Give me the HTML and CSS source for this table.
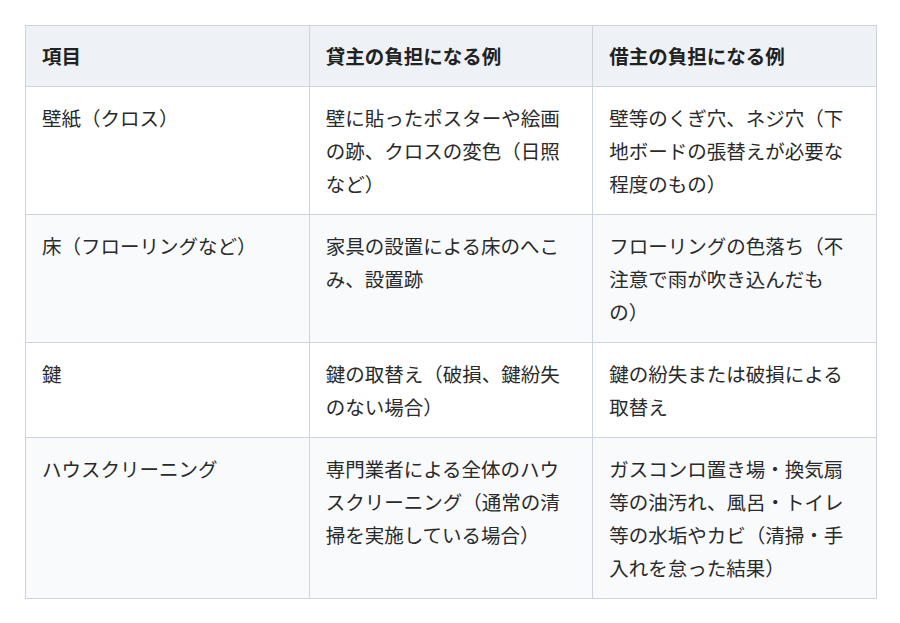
FILE: index.html
```html
<!DOCTYPE html>
<html lang="ja">
<head>
<meta charset="utf-8">
<title>負担区分</title>
<link rel="stylesheet" href="styles.css">
</head>
<body>
<table class="cost-table">
  <thead>
    <tr>
      <th>項目</th>
      <th>貸主の負担になる例</th>
      <th>借主の負担になる例</th>
    </tr>
  </thead>
  <tbody>
    <tr>
      <td>壁紙（クロス）</td>
      <td>壁に貼ったポスターや絵画の跡、クロスの変色（日照など）</td>
      <td>壁等のくぎ穴、ネジ穴（下地ボードの張替えが必要な程度のもの）</td>
    </tr>
    <tr>
      <td>床（フローリングなど）</td>
      <td>家具の設置による床のへこみ、設置跡</td>
      <td>フローリングの色落ち（不注意で雨が吹き込んだもの）</td>
    </tr>
    <tr>
      <td>鍵</td>
      <td>鍵の取替え（破損、鍵紛失のない場合）</td>
      <td>鍵の紛失または破損による取替え</td>
    </tr>
    <tr>
      <td>ハウスクリーニング</td>
      <td>専門業者による全体のハウスクリーニング（通常の清掃を実施している場合）</td>
      <td>ガスコンロ置き場・換気扇等の油汚れ、風呂・トイレ等の水垢やカビ（清掃・手入れを怠った結果）</td>
    </tr>
  </tbody>
</table>
</body>
</html>
```
FILE: styles.css
```css
html, body {
  margin: 0;
  padding: 0;
  background: #ffffff;
}
body {
  padding: 25px 24px 0 25px;
  font-family: "Noto Sans CJK JP", "Noto Sans", sans-serif;
  color: #2a2a2a;
}
.cost-table {
  width: 852px;
  border-collapse: collapse;
  table-layout: fixed;
  font-size: 19.5px;
  line-height: 33px;
  text-spacing-trim: space-all;
}
.cost-table th,
.cost-table td {
  border: 1px solid #ccd4de;
  padding: 14px 16px 14px 16px;
  text-align: left;
  vertical-align: top;
}
.cost-table th {
  background: #eef2f7;
  font-weight: 700;
  color: #222;
  padding-top: 13px;
  padding-bottom: 14px;
}
.cost-table tbody tr:nth-child(even) td {
  background: #f8fafc;
}
```
